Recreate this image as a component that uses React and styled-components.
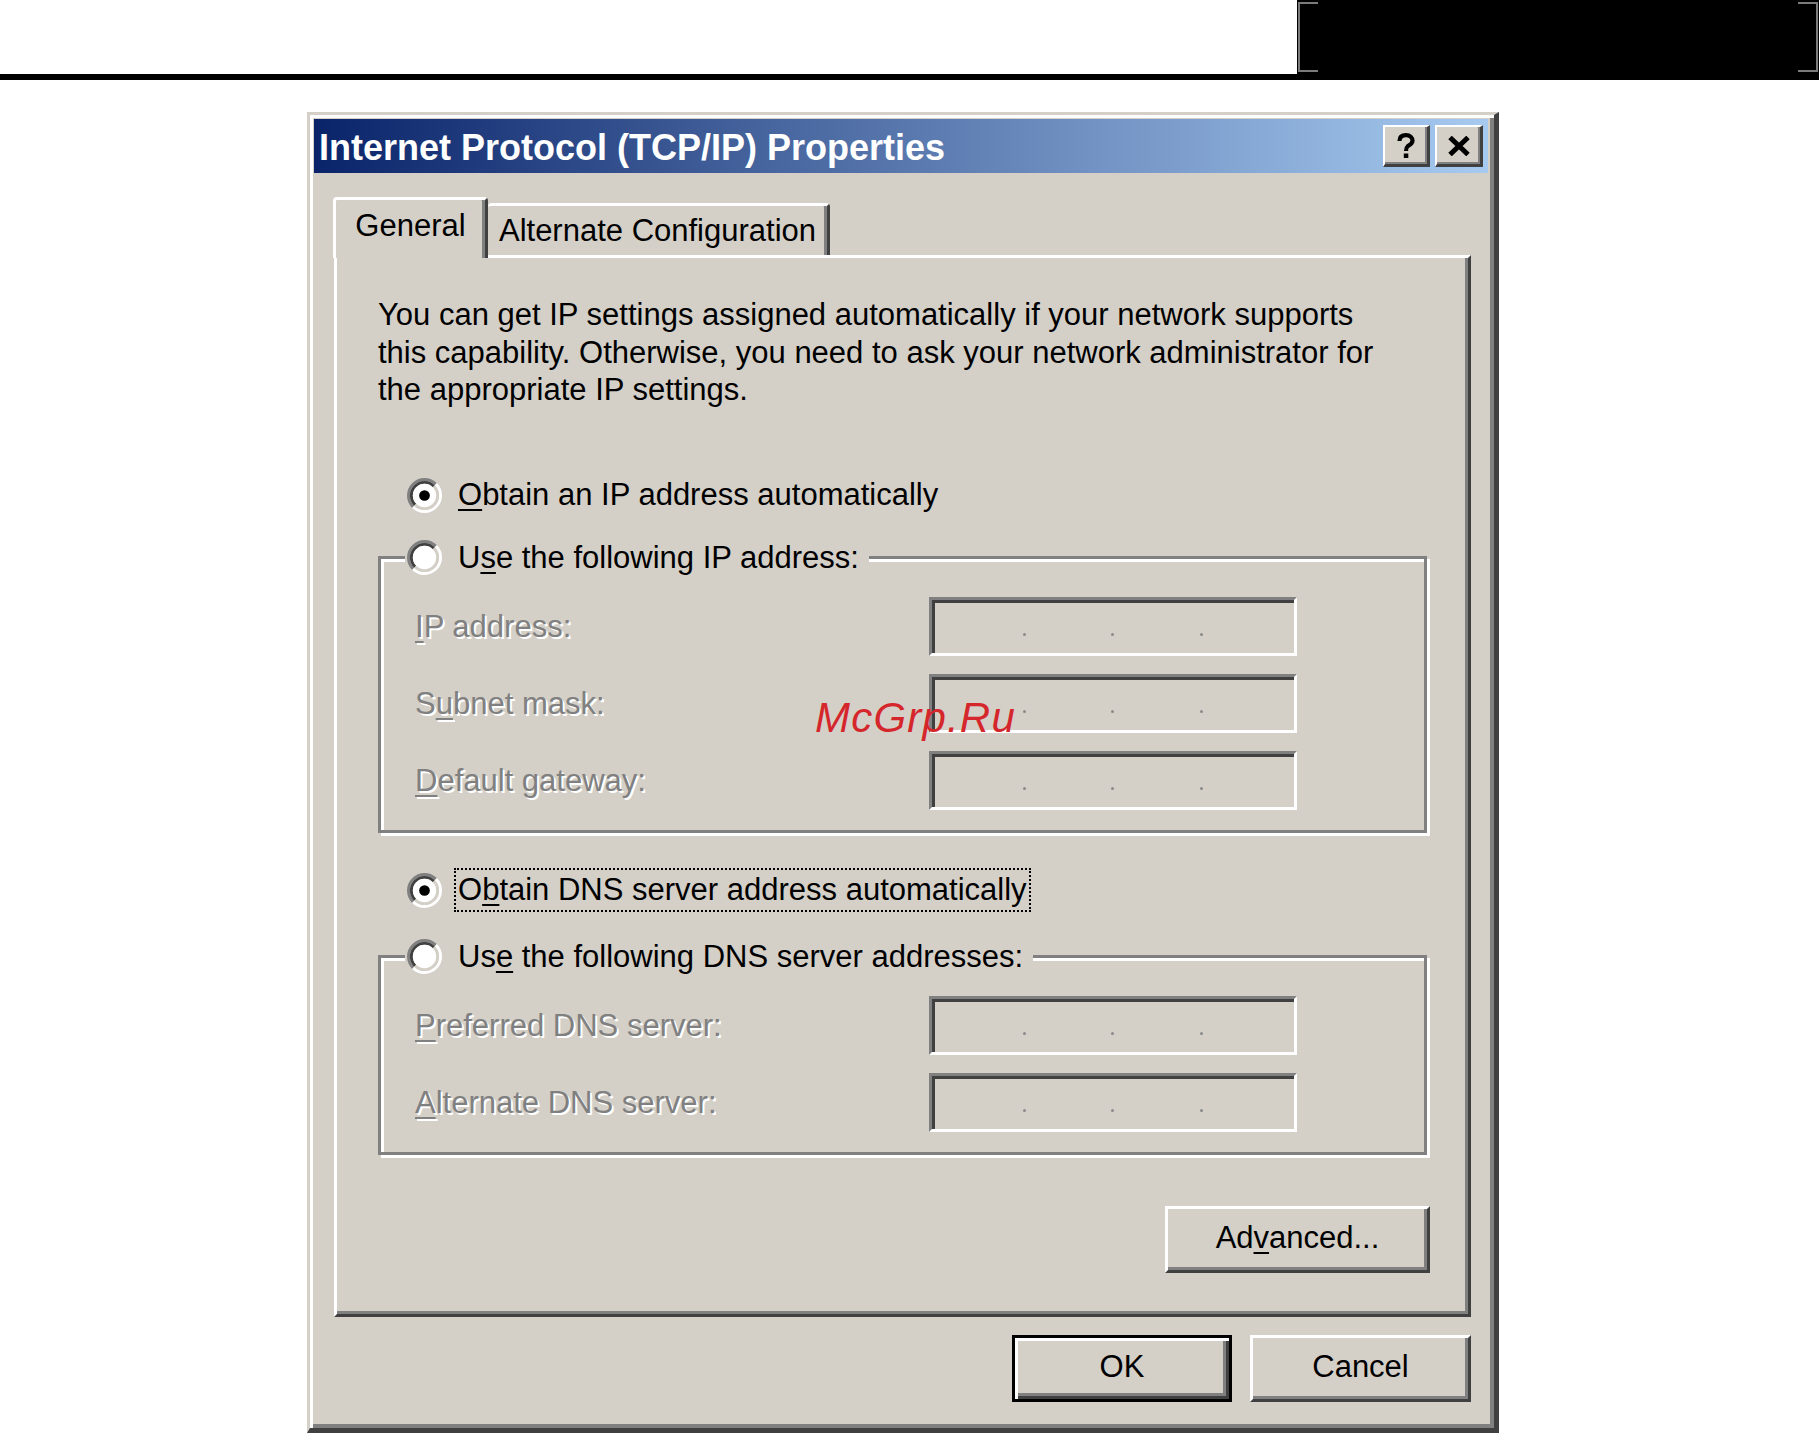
import React from 'react';
import styled, { createGlobalStyle } from 'styled-components';

// classic 3d colours
const FACE = '#d4d0c8';
const SHADOW = '#808080';
const DARK = '#404040';
const HILITE = '#ffffff';

const GlobalStyle = createGlobalStyle`
  html, body {
    margin: 0;
    padding: 0;
    background: #fff;
    overflow: hidden;
  }
  body {
    font-family: "Liberation Sans", Arial, sans-serif;
  }
`;

const Page = styled.div`
  position: relative;
  width: 1819px;
  height: 1433px;
  overflow: hidden;
  background: #fff;
`;

const TopBand = styled.header`
  display: flex;
  justify-content: flex-end;
  height: 74px;
  border-bottom: 6px solid #000;
`;

const BlackBox = styled.div`
  position: relative;
  width: 522px;
  background: #000;
  &::before,
  &::after {
    content: '';
    position: absolute;
    top: 2px;
    bottom: 2px;
    width: 18px;
    border: 2px solid #7b7b7b;
  }
  &::before {
    left: 1px;
    border-right: none;
  }
  &::after {
    right: 1px;
    border-left: none;
  }
`;

const Stage = styled.main`
  padding: 32px 0 0 307px;
`;

const Dialog = styled.section`
  box-sizing: border-box;
  display: flex;
  flex-direction: column;
  width: 1192px;
  height: 1321px;
  padding: 4px 6px 0 4px;
  background: ${FACE};
  border-style: solid;
  border-width: 3px 5px 5px 3px;
  border-color: ${FACE} ${DARK} ${DARK} ${FACE};
  box-shadow: inset 3px 3px 0 ${HILITE}, inset -4px -4px 0 ${SHADOW};
`;

const TitleBar = styled.div`
  display: flex;
  align-items: center;
  justify-content: space-between;
  height: 54px;
  padding: 0 5px 0 5px;
  background: linear-gradient(to right, #0a246a, #a6caf0);
`;

const Title = styled.h1`
  margin: 0;
  padding-top: 4px;
  color: #fff;
  font-size: 36px;
  font-weight: bold;
  white-space: nowrap;
`;

const CaptionButtons = styled.div`
  display: flex;
  gap: 5px;
`;

const CaptionButton = styled.button`
  box-sizing: border-box;
  display: flex;
  align-items: center;
  justify-content: center;
  width: ${(p) => p.$w}px;
  height: 42px;
  padding: 0;
  background: ${FACE};
  border-style: solid;
  border-width: 2px 3px 3px 2px;
  border-color: ${HILITE} ${DARK} ${DARK} ${HILITE};
  box-shadow: inset -2px -2px 0 ${SHADOW};
`;

const Body = styled.div`
  display: flex;
  flex-direction: column;
  padding: 0 17px 0 20px;
`;

const TabStrip = styled.div`
  display: flex;
  align-items: flex-end;
  height: 58px;
  margin-top: 24px;
  position: relative;
  z-index: 1;
`;

const Tab = styled.div`
  box-sizing: border-box;
  display: flex;
  align-items: center;
  justify-content: center;
  width: ${(p) => p.$w}px;
  height: ${(p) => (p.$active ? 61 : 52)}px;
  margin-left: ${(p) => (p.$active ? -1 : 0)}px;
  margin-bottom: ${(p) => (p.$active ? -3 : 0)}px;
  padding-bottom: ${(p) => (p.$active ? 6 : 0)}px;
  background: ${FACE};
  font-size: 31px;
  color: #000;
  border-style: solid;
  border-width: 3px 3px 0 ${(p) => (p.$active ? 3 : 0)}px;
  border-color: ${HILITE} ${DARK} transparent ${HILITE};
  border-radius: 4px 4px 0 0;
  box-shadow: inset -3px 0 0 ${SHADOW};
`;

const Panel = styled.div`
  box-sizing: border-box;
  height: 1062px;
  padding: 38px 41px 0 41px;
  border-style: solid;
  border-width: 3px;
  border-color: ${HILITE} ${DARK} ${DARK} ${HILITE};
  box-shadow: inset -3px -3px 0 ${SHADOW};
  font-size: 31px;
  color: #000;
`;

const Description = styled.p`
  margin: 0;
  line-height: 37.5px;
  white-space: nowrap;
`;

const RadioRow = styled.div`
  display: flex;
  align-items: center;
  gap: 12px;
  height: 44px;
  margin-top: ${(p) => p.$top || 0}px;
  margin-left: 29px;
`;

const Legend = styled(RadioRow)`
  width: fit-content;
  margin-top: -23.5px;
  margin-left: 24px;
  padding: 0 6px 0 2px;
  background: ${FACE};
`;

const RadioLabel = styled.span`
  box-sizing: border-box;
  display: flex;
  align-items: center;
  height: 44px;
  padding: 0 2px;
  border: 2px dotted ${(p) => (p.$focused ? '#000' : 'transparent')};
  white-space: nowrap;

  u {
    text-decoration-thickness: 2px;
    text-underline-offset: 4px;
  }
`;

const GroupBox = styled.div`
  margin-top: ${(p) => p.$top}px;
  padding-bottom: 20px;
  border: 3px solid ${SHADOW};
  box-shadow: inset 3px 3px 0 ${HILITE}, 3px 3px 0 ${HILITE};
`;

const FieldRow = styled.div`
  display: flex;
  align-items: center;
  height: 59px;
  margin-top: ${(p) => (p.$first ? 17.5 : 18)}px;
  padding-left: 34px;
`;

const FieldLabel = styled.span`
  flex: 0 0 514px;
  color: ${SHADOW};
  text-shadow: 2px 2px 0 ${HILITE};
  white-space: nowrap;

  u {
    text-decoration-thickness: 2px;
    text-underline-offset: 4px;
  }
`;

const IpBox = styled.div`
  box-sizing: border-box;
  display: flex;
  align-items: flex-start;
  width: 368px;
  height: 59px;
  padding-left: 5px;
  background: ${FACE};
  border-style: solid;
  border-width: 3px;
  border-color: ${SHADOW} ${HILITE} ${HILITE} ${SHADOW};
  box-shadow: inset 3px 3px 0 ${DARK}, inset -3px -3px 0 ${FACE};
`;

const Octet = styled.span`
  flex: 0 0 85.5px;
`;

const OctetDot = styled.span`
  flex: 0 0 3px;
  height: 3px;
  margin-top: 32.5px;
  border-radius: 50%;
  background: #8a8a8a;
`;

const ButtonRow = styled.div`
  display: flex;
  justify-content: flex-end;
  gap: 18px;
  margin-top: ${(p) => p.$top}px;
  margin-right: ${(p) => p.$right || 0}px;
`;

const PushButton = styled.button`
  box-sizing: border-box;
  width: ${(p) => p.$w}px;
  height: 67px;
  padding: 0 0 3px;
  background: ${FACE};
  color: #000;
  font-family: "Liberation Sans", Arial, sans-serif;
  font-size: 31px;
  border-style: solid;
  border-width: 3px;
  border-color: ${(p) => (p.$default ? '#000' : `${HILITE} ${DARK} ${DARK} ${HILITE}`)};
  box-shadow: ${(p) =>
    p.$default
      ? `inset 3px 3px 0 ${HILITE}, inset -3px -3px 0 ${DARK}, inset -6px -6px 0 ${SHADOW}`
      : `inset -3px -3px 0 ${SHADOW}`};

  u {
    text-decoration-thickness: 2px;
    text-underline-offset: 4px;
  }
`;

const Watermark = styled.div`
  position: absolute;
  left: 815px;
  top: 697px;
  font-family: "Liberation Sans", Arial, sans-serif;
  font-style: italic;
  font-size: 42px;
  line-height: 1;
  letter-spacing: 1.2px;
  color: #d5262b;
`;

function Radio({ checked }) {
  return (
    <svg width="35" height="35" viewBox="0 0 36 36">
      <path d="M6.33 29.67 A16.5 16.5 0 0 1 29.67 6.33" fill="none" stroke={SHADOW} strokeWidth="3" />
      <path d="M29.67 6.33 A16.5 16.5 0 0 1 6.33 29.67" fill="none" stroke={HILITE} strokeWidth="3" />
      <path d="M8.45 27.55 A13.5 13.5 0 0 1 27.55 8.45" fill="none" stroke={DARK} strokeWidth="3" />
      <path d="M27.55 8.45 A13.5 13.5 0 0 1 8.45 27.55" fill="none" stroke={FACE} strokeWidth="3" />
      <circle cx="18" cy="18" r="12" fill="#fff" />
      {checked && <circle cx="18" cy="18" r="5.5" fill="#000" />}
    </svg>
  );
}

function IpField() {
  return (
    <IpBox>
      <Octet />
      <OctetDot />
      <Octet />
      <OctetDot />
      <Octet />
      <OctetDot />
    </IpBox>
  );
}

function Field({ children, first }) {
  return (
    <FieldRow $first={first}>
      <FieldLabel>{children}</FieldLabel>
      <IpField />
    </FieldRow>
  );
}

export default function App() {
  return (
    <Page>
      <GlobalStyle />
      <TopBand>
        <BlackBox />
      </TopBand>
      <Stage>
        <Dialog>
          <TitleBar>
            <Title>Internet Protocol (TCP/IP) Properties</Title>
            <CaptionButtons>
              <CaptionButton $w={47} aria-label="Help">
                <svg width="20" height="26" viewBox="0 0 20 26">
                  <path
                    d="M3.5 8 C3.5 3.5 6.5 2.2 10 2.2 C14 2.2 16.5 4.5 16.5 7.8 C16.5 10.8 13.5 12 11.5 13.5 C10.3 14.5 10 15.5 10 18"
                    fill="none"
                    stroke="#000"
                    strokeWidth="4.2"
                  />
                  <rect x="7.8" y="20.5" width="4.5" height="4.5" fill="#000" />
                </svg>
              </CaptionButton>
              <CaptionButton $w={48} aria-label="Close">
                <svg width="24" height="20" viewBox="0 0 24 20">
                  <path d="M3 1.5 L21 18.5 M21 1.5 L3 18.5" stroke="#000" strokeWidth="5" />
                </svg>
              </CaptionButton>
            </CaptionButtons>
          </TitleBar>

          <Body>
            <TabStrip>
              <Tab $active $w={155}>General</Tab>
              <Tab $w={342}>Alternate Configuration</Tab>
            </TabStrip>

            <Panel>
              <Description>
                You can get IP settings assigned automatically if your network supports
                <br />
                this capability. Otherwise, you need to ask your network administrator for
                <br />
                the appropriate IP settings.
              </Description>

              <RadioRow $top={64.5}>
                <Radio checked />
                <RadioLabel>
                  <span><u>O</u>btain an IP address automatically</span>
                </RadioLabel>
              </RadioRow>

              <GroupBox $top={39}>
                <Legend>
                  <Radio />
                  <RadioLabel>
                    <span>U<u>s</u>e the following IP address:</span>
                  </RadioLabel>
                </Legend>
                <Field first><u>I</u>P address:</Field>
                <Field>S<u>u</u>bnet mask:</Field>
                <Field><u>D</u>efault gateway:</Field>
              </GroupBox>

              <RadioRow $top={35}>
                <Radio checked />
                <RadioLabel $focused>
                  <span>O<u>b</u>tain DNS server address automatically</span>
                </RadioLabel>
              </RadioRow>

              <GroupBox $top={43}>
                <Legend>
                  <Radio />
                  <RadioLabel>
                    <span>Us<u>e</u> the following DNS server addresses:</span>
                  </RadioLabel>
                </Legend>
                <Field first><u>P</u>referred DNS server:</Field>
                <Field><u>A</u>lternate DNS server:</Field>
              </GroupBox>

              <ButtonRow $top={51} $right={-3}>
                <PushButton $w={265}>Ad<u>v</u>anced...</PushButton>
              </ButtonRow>
            </Panel>

            <ButtonRow $top={18}>
              <PushButton $w={220} $default>OK</PushButton>
              <PushButton $w={221}>Cancel</PushButton>
            </ButtonRow>
          </Body>
        </Dialog>
      </Stage>
      <Watermark>McGrp.Ru</Watermark>
    </Page>
  );
}
